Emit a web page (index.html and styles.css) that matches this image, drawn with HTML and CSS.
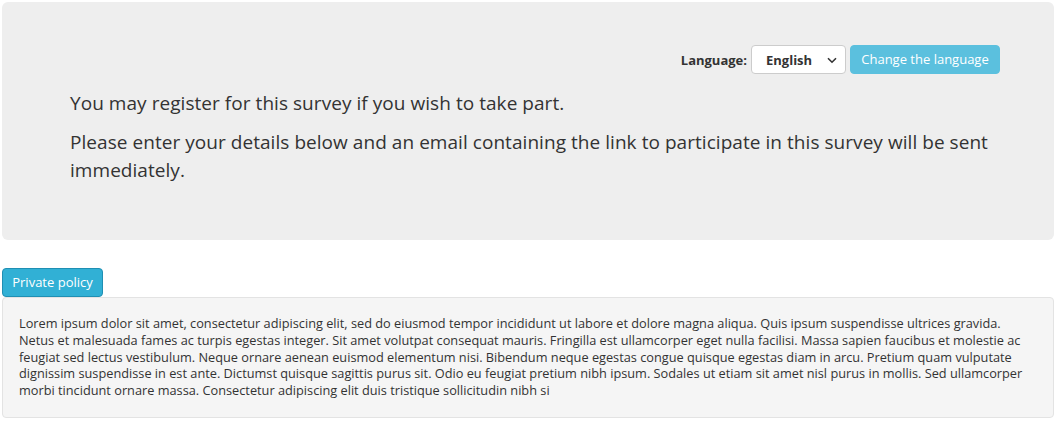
FILE: index.html
```html
<!DOCTYPE html>
<html lang="en">
<head>
<meta charset="utf-8">
<title>Survey registration</title>
<link rel="stylesheet" href="styles.css">
</head>
<body>
<div class="page">
  <div class="jumbotron">
    <div class="lang-row">
      <label class="lang-label" for="lang">Language:</label>
      <div class="select-wrap">
        <select id="lang" class="lang-select">
          <option>English</option>
        </select>
        <svg class="chev" width="10" height="7" viewBox="0 0 10 7"><path d="M1 1.2 L5 5.2 L9 1.2" fill="none" stroke="#333" stroke-width="1.6"/></svg>
      </div>
      <button class="btn btn-change">Change the language</button>
    </div>
    <p class="lead">You may register for this survey if you wish to take part.</p>
    <p class="lead">Please enter your details below and an email containing the link to participate in this survey will be sent immediately.</p>
  </div>
  <div class="policy">
    <button class="btn btn-policy">Private policy</button>
    <div class="well">Lorem ipsum dolor sit amet, consectetur adipiscing elit, sed do eiusmod tempor incididunt ut labore et dolore magna aliqua. Quis ipsum suspendisse ultrices gravida. Netus et malesuada fames ac turpis egestas integer. Sit amet volutpat consequat mauris. Fringilla est ullamcorper eget nulla facilisi. Massa sapien faucibus et molestie ac feugiat sed lectus vestibulum. Neque ornare aenean euismod elementum nisi. Bibendum neque egestas congue quisque egestas diam in arcu. Pretium quam vulputate dignissim suspendisse in est ante. Dictumst quisque sagittis purus sit. Odio eu feugiat pretium nibh ipsum. Sodales ut etiam sit amet nisl purus in mollis. Sed ullamcorper morbi tincidunt ornare massa. Consectetur adipiscing elit duis tristique sollicitudin nibh si</div>
  </div>
</div>
</body>
</html>
```
FILE: styles.css
```css
* { box-sizing: border-box; }
html, body { margin: 0; padding: 0; background: #fff; }
body {
  font-family: "Open Sans", "Noto Sans", sans-serif;
  color: #333;
}
.page {
  padding: 2px 7px 0 2px;
}
.jumbotron {
  background: #eeeeee;
  border-radius: 6px;
  height: 238px;
  padding: 43px 54px 0 68px;
}
.lang-row {
  display: flex;
  justify-content: flex-end;
  align-items: center;
  gap: 4px;
  height: 29px;
  margin-bottom: 15px;
}
.lang-label {
  font-size: 13px;
  font-weight: 700;
  color: #333;
}
.select-wrap {
  position: relative;
  width: 95px;
  height: 29px;
}
.lang-select {
  appearance: none;
  -webkit-appearance: none;
  width: 100%;
  height: 100%;
  border: 1px solid #ccc;
  border-radius: 4px;
  background: #fff;
  font-family: "Open Sans", "Noto Sans", sans-serif;
  font-size: 13px;
  font-weight: 700;
  color: #333;
  padding: 0 0 0 14px;
  margin: 0;
}
.chev {
  position: absolute;
  right: 9px;
  top: 12px;
}
.btn {
  font-family: "Open Sans", "Noto Sans", sans-serif;
  font-size: 13px;
  line-height: 17px;
  color: #fff;
  border-radius: 4px;
  cursor: pointer;
  margin: 0;
}
.btn-change {
  background: #5bc0de;
  border: 1px solid #5bc0de;
  height: 29px;
  width: 150px;
  padding: 5px 8px;
}
.lead {
  font-size: 19px;
  line-height: 28px;
  letter-spacing: 0.05px;
  margin: 0 0 11px 0;
  color: #333;
}
.policy {
  margin-top: 28px;
  display: flex;
  flex-direction: column;
  align-items: flex-start;
}
.btn-policy {
  background: #31b0d5;
  border: 1px solid #1f8fb3;
  height: 29px;
  width: 101px;
  padding: 5px 8px;
}
.well {
  align-self: stretch;
  background: #f5f5f5;
  border: 1px solid #e3e3e3;
  border-radius: 4px;
  padding: 17px 16px 18px 16px;
  font-size: 12.75px;
  line-height: 16.8px;
  color: #333;
  height: 121px;
}
```
